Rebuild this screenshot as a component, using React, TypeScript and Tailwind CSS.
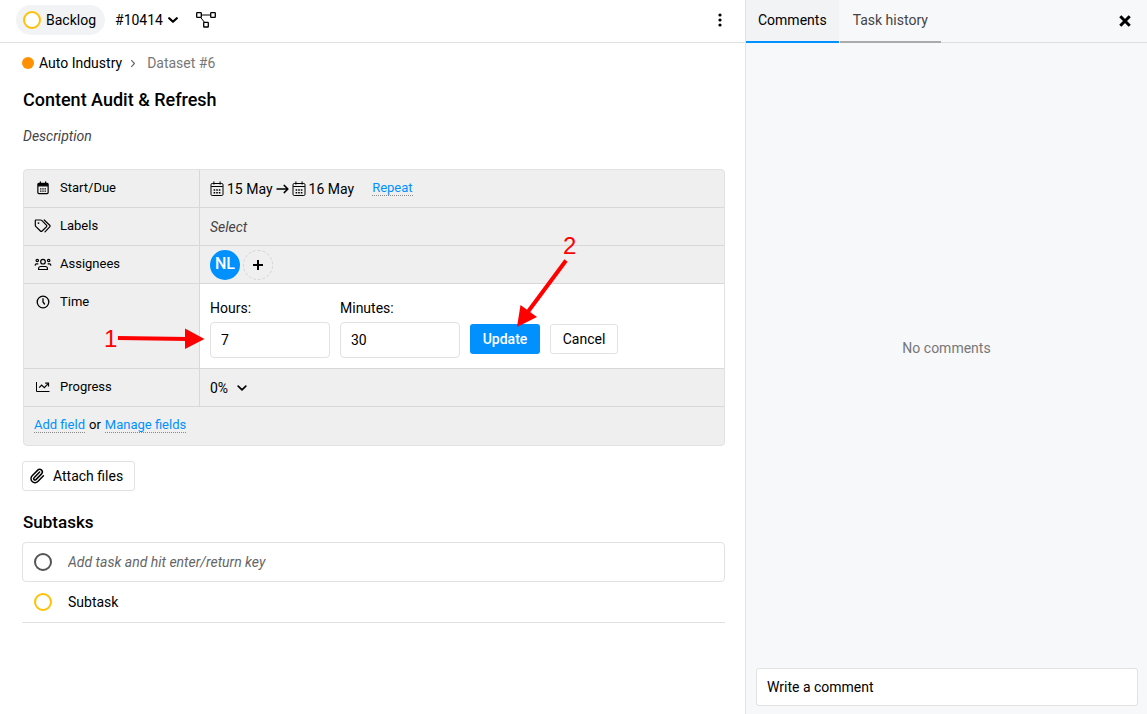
import React, { useState } from 'react';
import { Paperclip } from 'lucide-react';

type IconProps = { className?: string };

function FlowIcon() {
  return (
    <svg viewBox="0 0 20 16" className="h-4 w-5" fill="none" stroke="currentColor" strokeWidth="1.3">
      <rect x="0.7" y="0.7" width="4.6" height="4.6" rx="0.6" />
      <rect x="14.7" y="0.7" width="4.6" height="4.6" rx="0.6" />
      <rect x="7.7" y="10.4" width="4.6" height="4.6" rx="0.6" />
      <path d="M5.3 3h9.4M4.6 5.3l3.9 5.1" strokeWidth="1" />
    </svg>
  );
}

function ChevronIcon({ className }: IconProps) {
  return (
    <svg viewBox="0 0 10 6" className={className} fill="none" stroke="currentColor" strokeLinecap="round" strokeLinejoin="round">
      <path d="M1.2 1.2L5 4.8l3.8-3.6" />
    </svg>
  );
}

function CalendarIcon({ solid }: { solid?: boolean }) {
  return (
    <svg viewBox="0 0 14 16" className={solid ? 'h-[14px] w-3' : 'h-4 w-[14px]'} fill="none" stroke="currentColor" strokeWidth={solid ? 1.4 : 1}>
      <rect x="1" y="2.5" width="12" height="12" rx="1.2" />
      <path d="M3.9 0.8v2.4M10.1 0.8v2.4" strokeLinecap="round" />
      <path d="M1.2 5.5h11.6" />
      {solid && <path d="M1.2 3.9h11.6" strokeWidth="3" />}
      <path d="M3.6 9h1.6M6.2 9h1.6M8.8 9h1.6M3.6 11.7h1.6M6.2 11.7h1.6M8.8 11.7h1.6" strokeWidth="1.6" />
    </svg>
  );
}

function TagsIcon() {
  return (
    <svg viewBox="0 0 18 14" className="h-[14px] w-[18px] shrink-0" fill="none" stroke="currentColor" strokeWidth="1.2" strokeLinejoin="round" strokeLinecap="round">
      <path d="M1.9 1h4.8c.4 0 .7.1 1 .4l4.7 4.7c.5.5.5 1.2 0 1.7L8.100 12c-.5.5-1.2.5-1.700 0L1.700 7.300c-.3-.3-.4-.6-.4-1V1.600c0-.3.3-.6.6-.6z" />
      <path d="M10.2 1l5.500 5.200c.5.5.5 1.200 0 1.700L11 12.800" />
      <circle cx="4.5" cy="4.1" r="0.9" fill="currentColor" stroke="none" />
    </svg>
  );
}

function PeopleIcon() {
  return (
    <svg viewBox="0 0 18 13" className="h-[13px] w-[18px] shrink-0" fill="none" stroke="currentColor" strokeWidth="1.2" strokeLinecap="round">
      <circle cx="9" cy="3.7" r="2.3" />
      <circle cx="3.300" cy="2.500" r="1.200" />
      <circle cx="14.700" cy="2.500" r="1.200" />
      <path d="M4.600 11.500v-1c0-1.100.9-2 2-2h4.800c1.100 0 2 .9 2 2v1z" strokeLinejoin="round" />
      <path d="M1.200 7.200c0-.9.600-1.400 1.300-1.400h1.400M16.800 7.200c0-.9-.6-1.400-1.300-1.400h-1.400" />
    </svg>
  );
}

function ClockIcon() {
  return (
    <svg viewBox="0 0 14 14" className="h-[14px] w-[14px]" fill="none" stroke="currentColor" strokeWidth="1.3" strokeLinecap="round">
      <circle cx="7" cy="7" r="5.8" />
      <path d="M7 3.7V7l1.5 2" />
    </svg>
  );
}

function ProgressIcon() {
  return (
    <svg viewBox="0 0 14 12" className="h-3 w-[14px]" fill="none" stroke="currentColor" strokeWidth="1">
      <path d="M.5 1v9.500h13" />
      <path d="M3.2 6.600l2.400-2.500 2.700 2.500 3.600-3.700" strokeWidth="1.200" />
      <path d="M9.200 2.200h3.300v3.300" strokeWidth="1.200" />
    </svg>
  );
}

function ArrowRightIcon() {
  return (
    <svg viewBox="0 0 13 10" className="h-[10px] w-[13px]" fill="none" stroke="currentColor" strokeWidth="1.5" strokeLinecap="round" strokeLinejoin="round">
      <path d="M1 5h10.8M8.2 1.4L11.9 5 8.2 8.6" />
    </svg>
  );
}

type FieldProps = {
  icon: React.ReactNode;
  label: string;
  children: React.ReactNode;
  editing?: boolean;
};

function Field({ icon, label, children, editing }: FieldProps) {
  return (
    <div className="flex border-b border-[#d8d8d8]">
      <dt className="flex w-44 shrink-0 items-start gap-2 border-r border-[#d8d8d8] py-2 pl-[10px] text-[13px] leading-5">
        <span className="flex h-5 w-[18px] items-center justify-center">{icon}</span>
        <span>{label}</span>
      </dt>
      <dd className={editing ? 'relative flex-1 bg-white px-[10px] pt-[14px] pb-[10px]' : 'flex h-[37px] flex-1 items-center px-[10px]'}>
        {children}
      </dd>
    </div>
  );
}

function DottedLink({ children }: { children: React.ReactNode }) {
  return (
    <a href="#" className="border-b border-dotted border-[#8a8a8a] leading-[14px] text-[#0091ff]">
      {children}
    </a>
  );
}

// Numbered arrows that point at the steps for logging time
function StepArrows() {
  return (
    <svg viewBox="100 230 490 130" className="pointer-events-none absolute -top-[54px] -left-[100px] h-[130px] w-[490px]">
      <g fill="#ff0000" fontFamily="'Liberation Sans', sans-serif" fontSize="24">
        <text x="104" y="347">1</text>
        <path d="M185 328.5L204.500 339 185 349z" />
        <text x="563" y="254">2</text>
        <path d="M520.500 305L537 317 517 327z" />
      </g>
      <path d="M118 338L188 339M566 260.500L527 313" stroke="#ff0000" strokeWidth="4" />
    </svg>
  );
}

function TimeForm() {
  const [hours, setHours] = useState('7');
  const [minutes, setMinutes] = useState('30');
  const inputClass = 'h-9 w-[120px] rounded border border-[#e2e2e2] bg-white px-[10px] outline-none';

  return (
    <form className="flex items-end gap-[10px]" onSubmit={(e) => e.preventDefault()}>
      <div className="flex flex-col gap-1">
        <label htmlFor="hours">Hours:</label>
        <input id="hours" className={inputClass} value={hours} onChange={(e) => setHours(e.target.value)} />
      </div>
      <div className="flex flex-col gap-1">
        <label htmlFor="minutes">Minutes:</label>
        <input id="minutes" className={inputClass} value={minutes} onChange={(e) => setMinutes(e.target.value)} />
      </div>
      <button type="submit" className="mb-1 h-[30px] w-[70px] rounded-[3px] bg-[#0091ff] font-medium text-white">
        Update
      </button>
      <button type="button" className="mb-1 h-[30px] w-[68px] rounded-[3px] border border-[#e2e2e2] bg-white">
        Cancel
      </button>
    </form>
  );
}

function TaskHeader() {
  return (
    <header className="flex h-[43px] items-center border-b border-[#e2e2e2] pr-[23px] pb-[3px] pl-4">
      <button className="flex h-[30px] items-center gap-[5px] rounded-full bg-[#f1f3f5] pr-[9px] pl-[7px]">
        <span className="h-[18px] w-[18px] rounded-full border-2 border-[#ffc107] bg-white" />
        Backlog
      </button>
      <button className="ml-[10px] flex items-center gap-[5px]">
        #10414
        <ChevronIcon className="h-[6px] w-[10px] stroke-[2.2]" />
      </button>
      <button className="ml-[18px]" aria-label="Dependencies">
        <FlowIcon />
      </button>
      <button className="ml-auto" aria-label="More">
        <svg viewBox="0 0 4 14" className="h-[14px] w-1" fill="currentColor">
          <circle cx="2" cy="2" r="1.6" />
          <circle cx="2" cy="7" r="1.6" />
          <circle cx="2" cy="12" r="1.6" />
        </svg>
      </button>
    </header>
  );
}

function Subtasks() {
  const [title, setTitle] = useState('');

  return (
    <section className="mt-[19px]">
      <h2 className="pl-px text-[17px] leading-6 font-medium">Subtasks</h2>
      <div className="mt-2 flex h-10 items-center gap-4 rounded border border-[#e2e2e2] pl-[11px]">
        <span className="h-[18px] w-[18px] rounded-full border-2 border-[#555]" />
        <input
          aria-label="New subtask"
          placeholder="Add task and hit enter/return key"
          className="flex-1 outline-none placeholder:text-[#666] placeholder:italic"
          value={title}
          onChange={(e) => setTitle(e.target.value)}
        />
      </div>
      <div className="flex h-[41px] items-center gap-4 border-b border-[#e2e2e2] pl-3">
        <span className="h-[18px] w-[18px] rounded-full border-2 border-[#ffc107]" />
        Subtask
      </div>
    </section>
  );
}

function TaskPanel() {
  return (
    <main className="min-w-0 flex-1">
      <TaskHeader />
      <div className="pr-5 pl-[22px]">
        <nav className="mt-[10px] flex items-center">
          <span className="mr-[5px] h-3 w-3 rounded-full bg-[#ff9100]" />
          <a href="#">Auto Industry</a>
          <ChevronIcon className="mx-[7px] h-[5px] w-2 -rotate-90 stroke-[1.4] text-[#666]" />
          <a href="#" className="ml-[3px] text-[#777]">Dataset #6</a>
        </nav>
        <h1 className="mt-[15px] pl-px text-[18px] leading-6 font-medium">Content Audit &amp; Refresh</h1>
        <p className="mt-[14px] pl-px text-[#444] italic">Description</p>

        <div className="mt-[23px] ml-px rounded border border-[#e2e2e2] bg-[#efefef]">
          <dl>
            <Field icon={<CalendarIcon solid />} label="Start/Due">
              <div className="flex items-center">
                <button className="flex items-center gap-[3px]">
                  <CalendarIcon />
                  15 May
                </button>
                <span className="mx-[3px]">
                  <ArrowRightIcon />
                </span>
                <button className="mr-[18px] flex items-center gap-[3px]">
                  <CalendarIcon />
                  16 May
                </button>
                <span className="flex text-[13px]">
                  <DottedLink>Repeat</DottedLink>
                </span>
              </div>
            </Field>
            <Field icon={<TagsIcon />} label="Labels">
              <button className="text-[#444] italic">Select</button>
            </Field>
            <Field icon={<PeopleIcon />} label="Assignees">
              <div className="flex gap-[3px]">
                <span className="flex h-[30px] w-[30px] items-center justify-center rounded-full bg-[#0091ff] text-[16px] font-medium text-white">
                  NL
                </span>
                <button aria-label="Add assignee" className="flex h-[30px] w-[30px] items-center justify-center rounded-full border border-dashed border-[#d4d4d4]">
                  <svg viewBox="0 0 12 12" className="h-3 w-3" stroke="currentColor" strokeWidth="2">
                    <path d="M6 1v10M1 6h10" />
                  </svg>
                </button>
              </div>
            </Field>
            <Field icon={<ClockIcon />} label="Time" editing>
              <TimeForm />
              <StepArrows />
            </Field>
            <Field icon={<ProgressIcon />} label="Progress">
              <button className="flex items-center gap-[9px]">
                0%
                <ChevronIcon className="h-[6px] w-[10px] stroke-[1.7]" />
              </button>
            </Field>
          </dl>
          <p className="flex h-[38px] items-center gap-1 px-[10px] pb-[2px] text-[13px]">
            <DottedLink>Add field</DottedLink>
            or
            <DottedLink>Manage fields</DottedLink>
          </p>
        </div>

        <button className="mt-[15px] flex h-[30px] items-center gap-2 rounded-[3px] border border-[#e2e2e2] pr-[11px] pl-[6px]">
          <Paperclip className="h-4 w-4" strokeWidth={2.2} />
          Attach files
        </button>

        <Subtasks />
      </div>
    </main>
  );
}

function CommentsPanel() {
  return (
    <aside className="flex w-[402px] shrink-0 flex-col border-l border-[#e2e2e2] bg-[#f7f8fa]">
      <div className="flex h-[43px] border-b border-[#dcdee0]">
        <button className="h-[43px] border-b-2 border-[#0091ff] bg-[#f1f3f5] px-3 pb-[2px]">Comments</button>
        <button className="ml-px h-[43px] border-b-2 border-[#aaa] px-[13px] pb-[2px] text-[#444]">Task history</button>
        <button className="mr-4 ml-auto" aria-label="Close">
          <svg viewBox="0 0 12 12" className="h-3 w-3" stroke="currentColor" strokeWidth="3">
            <path d="M1.3 1.3l9.4 9.4M10.7 1.3l-9.4 9.4" />
          </svg>
        </button>
      </div>
      <div className="flex flex-1 items-center justify-center pb-4 text-[#777]">No comments</div>
      <div className="px-[10px] pr-[9px] pb-2">
        <input
          aria-label="Comment"
          placeholder="Write a comment"
          className="h-[38px] w-full rounded-[3px] border border-[#e2e2e2] bg-white px-[10px] outline-none placeholder:text-black"
        />
      </div>
    </aside>
  );
}

function App() {
  return (
    <div className="flex min-h-screen bg-white font-[Roboto,sans-serif] text-sm text-black">
      <TaskPanel />
      <CommentsPanel />
    </div>
  );
}

export default App;
